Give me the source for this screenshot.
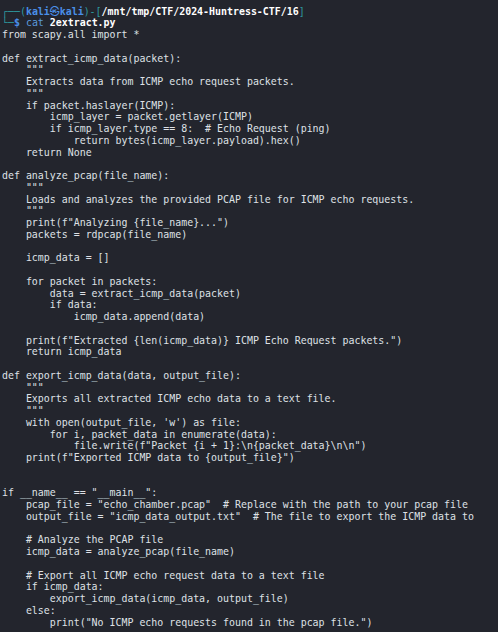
import React from "react";

const code = `from scapy.all import *

def extract_icmp_data(packet):
    """
    Extracts data from ICMP echo request packets.
    """
    if packet.haslayer(ICMP):
        icmp_layer = packet.getlayer(ICMP)
        if icmp_layer.type == 8:  # Echo Request (ping)
            return bytes(icmp_layer.payload).hex()
    return None

def analyze_pcap(file_name):
    """
    Loads and analyzes the provided PCAP file for ICMP echo requests.
    """
    print(f"Analyzing {file_name}...")
    packets = rdpcap(file_name)

    icmp_data = []

    for packet in packets:
        data = extract_icmp_data(packet)
        if data:
            icmp_data.append(data)

    print(f"Extracted {len(icmp_data)} ICMP Echo Request packets.")
    return icmp_data

def export_icmp_data(data, output_file):
    """
    Exports all extracted ICMP echo data to a text file.
    """
    with open(output_file, 'w') as file:
        for i, packet_data in enumerate(data):
            file.write(f"Packet {i + 1}:\\n{packet_data}\\n\\n")
    print(f"Exported ICMP data to {output_file}")


if __name__ == "__main__":
    pcap_file = "echo_chamber.pcap"  # Replace with the path to your pcap file
    output_file = "icmp_data_output.txt"  # The file to export the ICMP data to

    # Analyze the PCAP file
    icmp_data = analyze_pcap(file_name)

    # Export all ICMP echo request data to a text file
    if icmp_data:
        export_icmp_data(icmp_data, output_file)
    else:
        print("No ICMP echo requests found in the pcap file.")`;

function Line({ children }: { children?: React.ReactNode }) {
  return <div className="h-[11.76px] whitespace-pre">{children}</div>;
}

export default function App() {
  return (
    <div
      className="w-[498px] h-[632px] overflow-hidden bg-[#23252d] text-[#dfe1e6] text-[9.94px] leading-[11.76px] pt-[5.6px] pl-[2px]"
      style={{ fontFamily: '"DejaVu Sans Mono", "Noto Sans CJK SC", monospace' }}
    >
      <Line>
        <span className="text-[#2e9aa0]">┌──(</span>
        <span className="text-[#4a8fe8] font-bold">kali㉿kali</span>
        <span className="text-[#2e9aa0]">)-[</span>
        <span className="text-white font-bold">/mnt/tmp/CTF/2024-Huntress-CTF/16</span>
        <span className="text-[#2e9aa0]">]</span>
      </Line>
      <Line>
        <span className="text-[#2e9aa0]">└─</span>
        <span className="text-[#4a8fe8] font-bold">$</span>
        <span className="text-[#5b9ade]"> cat</span>
        <span className="text-white font-bold"> 2extract.py</span>
      </Line>
      {code.split("\n").map((l, i) => (
        <Line key={i}>{l}</Line>
      ))}
    </div>
  );
}
